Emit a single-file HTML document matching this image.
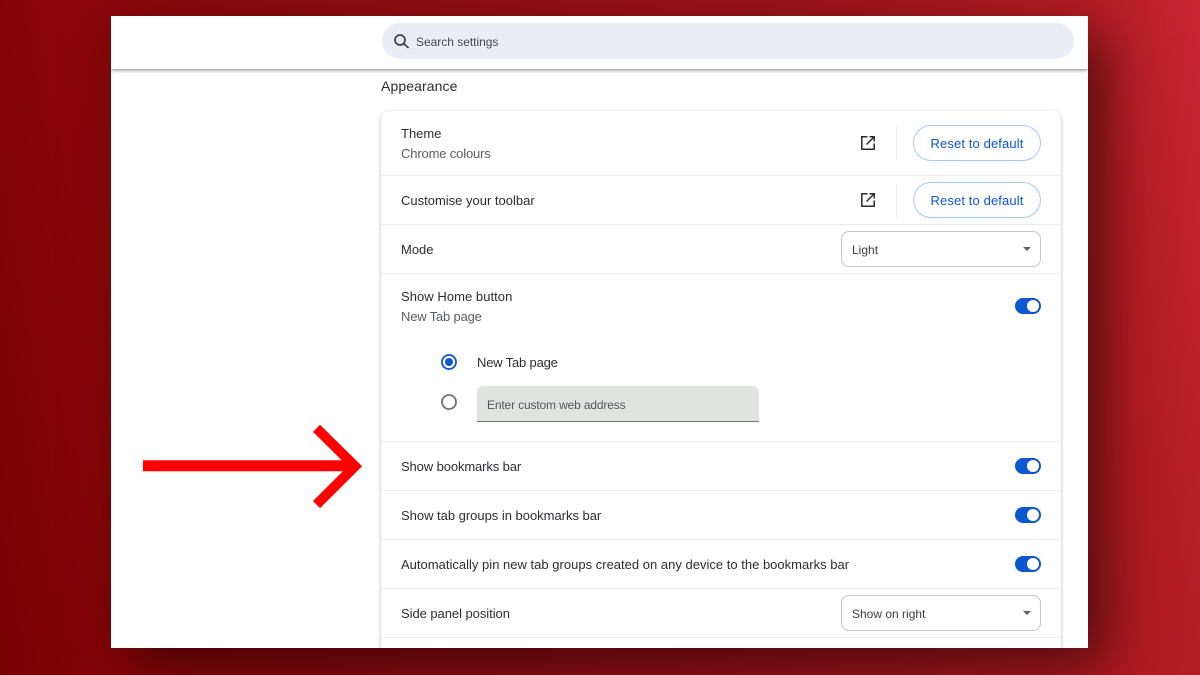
<!DOCTYPE html>
<html lang="en"><head><meta charset="utf-8"><title>Settings</title>
<style>
html,body{margin:0;padding:0}
body{width:1200px;height:675px;overflow:hidden;position:relative;font-family:"Liberation Sans",sans-serif;background:linear-gradient(80deg,#780000 0%,#8a0608 12%,#900d12 40%,#a0141a 70%,#b41c22 91%,#c82632 100%)}
.win{position:absolute;left:111px;top:16px;width:977px;height:632px;background:#fff;overflow:hidden;box-shadow:18px 18px 50px rgba(0,0,0,.52)}
.bar{position:absolute;left:0;top:0;width:977px;height:53px;background:#fff;box-shadow:0 1px 4px rgba(0,0,0,.5);z-index:3}
.search{position:absolute;left:271px;top:7px;width:692px;height:36px;border-radius:18px;background:#e9eef6}
.t{position:absolute;white-space:nowrap;font-size:13px;line-height:16px;color:#2c2d30}
.s{color:#5a5c60}
.card{position:absolute;left:270px;top:95px;width:680px;height:537px;background:#fff;border-radius:8px 8px 0 0;box-shadow:0 1px 3px rgba(0,0,0,.32)}
.hr{position:absolute;left:0;width:680px;height:1px;background:#ebebeb}
.btn{position:absolute;left:532px;width:126px;height:34px;border:1px solid #a8c7fa;border-radius:18px;background:#fff;color:#0b57d0;font-size:13px;line-height:36px;text-align:center;letter-spacing:.12px;white-space:nowrap}
.sel{position:absolute;left:460px;width:198px;height:34px;border:1px solid #c4c7c5;border-radius:8px;background:#fff}
.sel span{position:absolute;left:10px;top:10px;font-size:12px;line-height:16px;color:#3c3d40;white-space:nowrap}
.sel i{position:absolute;left:181px;top:15px;width:0;height:0;border-left:4px solid transparent;border-right:4px solid transparent;border-top:4px solid #5f6368}
.tg{position:absolute;left:634px;width:26px;height:16px;border-radius:8px;background:#0b57d0}
.tg i{position:absolute;left:12px;top:2px;width:12px;height:12px;border-radius:50%;background:#fff}
.ic{position:absolute;left:478px;width:18px;height:18px}
.vd{position:absolute;left:515px;width:1px;height:33px;background:#ebebeb}
</style></head><body>
<div class="win">
<div class="bar">
<div class="search">
<svg style="position:absolute;left:10px;top:8px" width="20" height="20" viewBox="0 0 20 20" fill="none" stroke="#3c4043" stroke-width="1.7"><circle cx="8" cy="9" r="5"/><path d="M11.7 12.7 16.6 17"/></svg>
<div class="t" style="left:34px;top:11px;font-size:12px;letter-spacing:-.02px;color:#44474c">Search settings</div>
</div>
</div>
<div class="t" style="left:270px;top:62px;font-size:14px;letter-spacing:.1px;color:#2c2d30">Appearance</div>
<div class="card">
<div class="t" style="left:20px;top:15px">Theme</div>
<div class="t s" style="left:20px;top:35px;letter-spacing:-.15px">Chrome colours</div>
<svg class="ic" style="top:23px" viewBox="0 0 18 18" fill="none" stroke="#2b2b2b" stroke-width="1.5"><path d="M8.5 2.8H2.8V15.2H15.2V9.5"/><path d="M10.5 2.8H15.2V7.5M15 3 7.5 10.5"/></svg>
<div class="vd" style="top:16px"></div>
<div class="btn" style="top:14px">Reset to default</div>
<div class="hr" style="top:64px"></div>
<div class="t" style="left:20px;top:82px">Customise your toolbar</div>
<svg class="ic" style="top:80px" viewBox="0 0 18 18" fill="none" stroke="#2b2b2b" stroke-width="1.5"><path d="M8.5 2.8H2.8V15.2H15.2V9.5"/><path d="M10.5 2.8H15.2V7.5M15 3 7.5 10.5"/></svg>
<div class="vd" style="top:73px"></div>
<div class="btn" style="top:71px">Reset to default</div>
<div class="hr" style="top:113px"></div>
<div class="t" style="left:20px;top:131px">Mode</div>
<div class="sel" style="top:120px"><span>Light</span><i></i></div>
<div class="hr" style="top:162px"></div>
<div class="t" style="left:20px;top:178px;letter-spacing:.05px">Show Home button</div>
<div class="t s" style="left:20px;top:198px;letter-spacing:-.18px">New Tab page</div>
<div class="tg" style="top:187px"><i></i></div>
<svg style="position:absolute;left:60px;top:243px" width="16" height="16" viewBox="0 0 16 16"><circle cx="8" cy="8" r="7" fill="none" stroke="#0b57d0" stroke-width="1.8"/><circle cx="8" cy="8" r="4" fill="#0b57d0"/></svg>
<div class="t" style="left:96px;top:244px;letter-spacing:-.18px">New Tab page</div>
<svg style="position:absolute;left:60px;top:283px" width="16" height="16" viewBox="0 0 16 16"><circle cx="8" cy="8" r="7" fill="none" stroke="#6f7174" stroke-width="1.8"/></svg>
<div style="position:absolute;left:96px;top:275px;width:282px;height:35px;background:#e1e3e1;border-radius:6px 6px 0 0;border-bottom:1px solid #6e7072"></div>
<div class="t" style="left:106px;top:286px;font-size:12px;letter-spacing:-.15px;color:#54565a">Enter custom web address</div>
<div class="hr" style="top:330px"></div>
<div class="t" style="left:20px;top:348px;letter-spacing:-.11px">Show bookmarks bar</div>
<div class="tg" style="top:347px"><i></i></div>
<div class="hr" style="top:379px"></div>
<div class="t" style="left:20px;top:397px;letter-spacing:-.02px">Show tab groups in bookmarks bar</div>
<div class="tg" style="top:396px"><i></i></div>
<div class="hr" style="top:428px"></div>
<div class="t" style="left:20px;top:446px;letter-spacing:.01px">Automatically pin new tab groups created on any device to the bookmarks bar</div>
<div class="tg" style="top:445px"><i></i></div>
<div class="hr" style="top:477px"></div>
<div class="t" style="left:20px;top:495px;letter-spacing:-.05px">Side panel position</div>
<div class="sel" style="top:484px"><span>Show on right</span><i></i></div>
<div class="hr" style="top:526px"></div>
</div>
</div>
<svg style="position:absolute;left:0;top:0" width="1200" height="675" viewBox="0 0 1200 675"><path d="M143 465.8H355" fill="none" stroke="#f00" stroke-width="11"/><path d="M316.5 428.3 355 466.3 316.5 504.6" fill="none" stroke="#f00" stroke-width="10"/></svg>
</body></html>
